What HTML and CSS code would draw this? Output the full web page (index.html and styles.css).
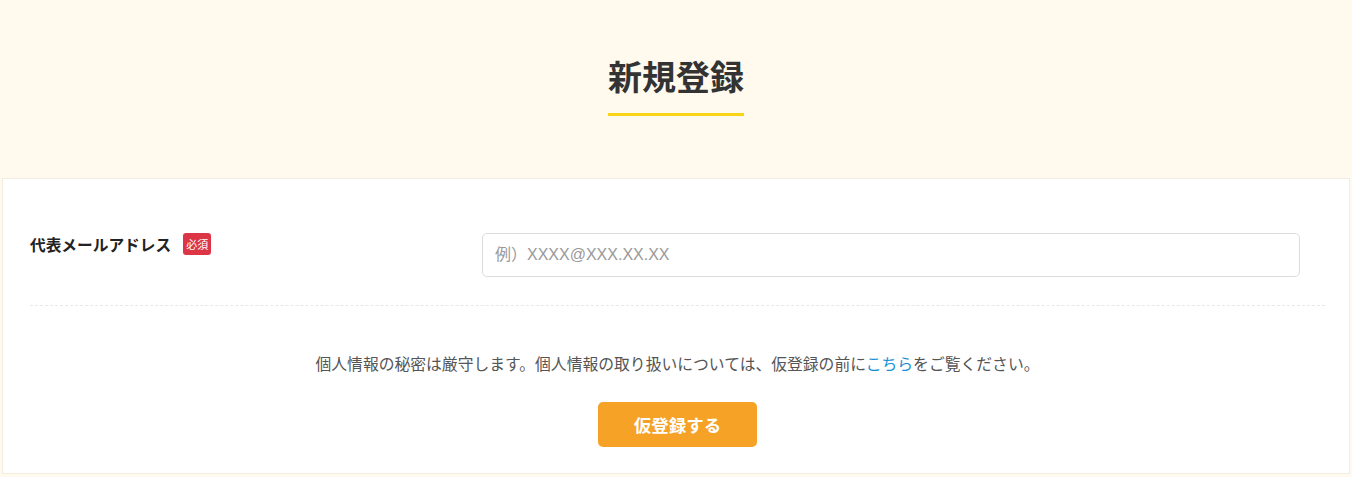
FILE: index.html
```html
<!DOCTYPE html>
<html lang="ja">
<head>
    <meta charset="UTF-8">
    <meta name="viewport" content="width=device-width, initial-scale=1.0">
    <title>新規登録</title>
    <link rel="stylesheet" href="styles.css">
</head>
<body>
    <div class="hero">
        <h1>新規登録</h1>
    </div>

    <div class="form-card">
        <div class="form-row">
            <div class="form-label">
                <span>代表メールアドレス</span>
                <span class="required">必須</span>
            </div>
            <div class="form-field">
                <input type="email" placeholder="例）XXXX@XXX.XX.XX">
            </div>
        </div>

        <div class="form-footer">
            <p class="notice">個人情報の秘密は厳守します。個人情報の取り扱いについては、仮登録の前に<a href="#">こちら</a>をご覧ください。</p>
            <button type="submit">仮登録する</button>
        </div>
    </div>
</body>
</html>
```

FILE: styles.css
```css
body {
    margin: 0;
    font-family: "Noto Sans CJK JP", "Noto Sans", sans-serif;
    background-color: #fffaed;
    color: #333;
}

.hero {
    text-align: center;
    padding: 51px 0 62px;
}

.hero h1 {
    display: inline-block;
    margin: 0;
    font-size: 34px;
    line-height: 50px;
    font-weight: 700;
    color: #333;
    padding-bottom: 12px;
    border-bottom: 3px solid #f9d417;
}

.form-card {
    background: #fff;
    margin: 0 2px;
    border: 1px solid #f2ede2;
    padding: 0 24px 26px 27px;
}

.form-row {
    display: flex;
    align-items: flex-start;
    padding: 54px 0 28px;
    border-bottom: 1px dashed #e8e8e8;
}

.form-label {
    width: 452px;
    display: flex;
    align-items: center;
    gap: 12px;
    height: 22px;
    font-size: 15.7px;
    font-weight: 700;
    color: #222;
}

.required {
    display: inline-block;
    background-color: #dc3545;
    color: white;
    font-size: 11px;
    font-weight: 400;
    line-height: 22px;
    padding: 0 3px;
    border-radius: 3px;
}

.form-field {
    flex: 1;
    padding-right: 25px;
}

input[type="email"] {
    width: 100%;
    box-sizing: border-box;
    height: 44px;
    padding: 0 12px;
    border: 1px solid #dcdcdc;
    border-radius: 5px;
    font-family: "Liberation Sans", "Noto Sans CJK JP", sans-serif;
    font-size: 16px;
    color: #333;
}

input::placeholder {
    color: #999;
}

.form-footer {
    text-align: center;
    padding-top: 46px;
}

.notice {
    margin: 0 0 26px;
    font-size: 15.8px;
    line-height: 24px;
    color: #555;
}

.notice a {
    color: #1a8fd8;
    text-decoration: none;
}

button {
    width: 159px;
    height: 45px;
    background-color: #f6a227;
    color: white;
    border: none;
    border-radius: 5px;
    font-family: inherit;
    font-size: 17.5px;
    font-weight: 700;
    cursor: pointer;
}

button:hover {
    background-color: #e8931a;
}
```
